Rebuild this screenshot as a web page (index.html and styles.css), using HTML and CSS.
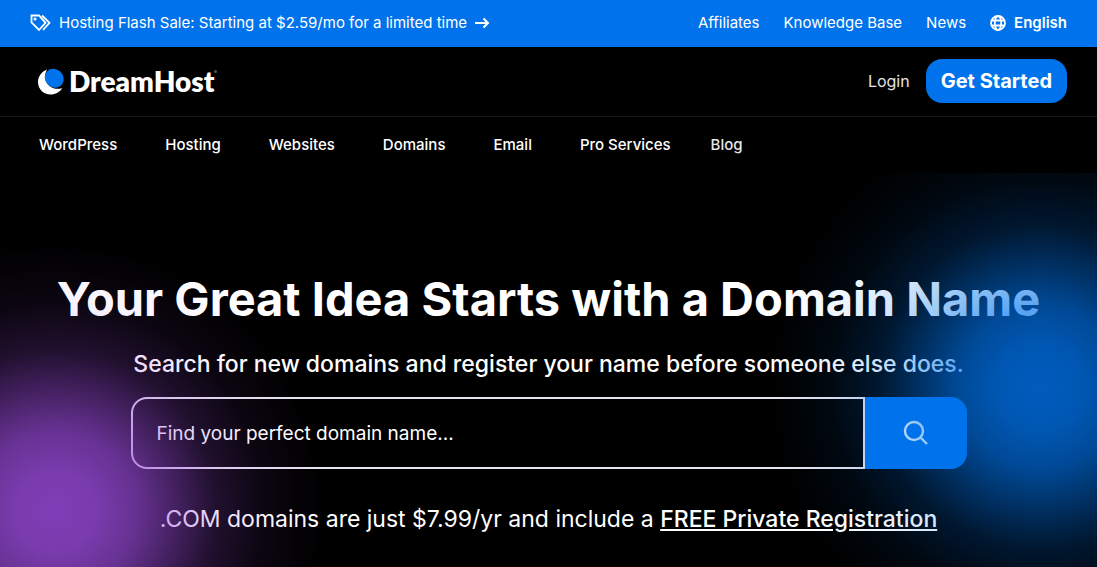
FILE: index.html
```html
<!DOCTYPE html>
<html lang="en">

<head>
  <meta charset="UTF-8">
  <meta name="viewport" content="width=device-width, initial-scale=1">
  <title>Domain Names - DreamHost</title>
  <link rel="stylesheet" href="styles.css">
</head>

<body>
  <div class="topbar">
    <a class="promo" href="#">
      <svg class="icon-tags" viewBox="0 0 22 18" aria-hidden="true">
        <path d="M1.500 1.500h7.500l6.500 7.300-6.500 7.200-7.500-7.500z M12 1.500l7.500 7.300-6.500 7.200" />
        <circle cx="5" cy="5" r=".6" />
      </svg>
      <span>Hosting Flash Sale: Starting at $2.59/mo for a limited time</span>
      <svg class="icon-arrow" viewBox="0 0 16 12" aria-hidden="true">
        <path d="M1 6h13M9.500 1.500L14 6l-4.500 4.500" />
      </svg>
    </a>
    <div class="toplinks">
      <a href="#">Affiliates</a>
      <a href="#">Knowledge Base</a>
      <a href="#">News</a>
      <button class="lang" type="button">
        <svg class="icon-globe" viewBox="0 0 16 16" aria-hidden="true">
          <circle cx="8" cy="8" r="7" />
          <ellipse cx="8" cy="8" rx="3.200" ry="7" />
          <path d="M1.500 5.500h13M1.500 10.500h13" />
        </svg>
        English
      </button>
    </div>
  </div>

  <header class="header">
    <a class="logo" href="#">
      <svg class="icon-moon" viewBox="0 0 26 26" aria-hidden="true">
        <path d="M9 1.500C3.500 3.500 0 8.500 0 14c0 7 5.500 12.500 12.500 12.500 5 0 9.500-2.500 11.800-6.500C14 24 2.500 13.500 9 1.500z" fill="#fff" />
        <ellipse cx="16.200" cy="10.200" rx="10" ry="9" transform="rotate(45 16.200 10.200)" fill="#0073ec" />
      </svg>
      <span>DreamHost</span>
      <i class="mark"></i>
    </a>
    <div class="account">
      <a class="login" href="#">Login</a>
      <a class="started" href="#">Get Started</a>
    </div>
  </header>

  <nav class="nav">
    <a href="#">WordPress</a>
    <a href="#">Hosting</a>
    <a href="#">Websites</a>
    <a href="#">Domains</a>
    <a href="#">Email</a>
    <a href="#">Pro Services</a>
    <a class="blog" href="#">Blog</a>
  </nav>

  <main class="hero">
    <h1>Your Great Idea Starts with a Domain Name</h1>
    <p class="lead">Search for new domains and register your name before someone else does.</p>
    <form class="search">
      <input type="text" aria-label="Domain name" placeholder="Find your perfect domain name...">
      <button type="submit" aria-label="Search">
        <svg class="icon-search" viewBox="0 0 26 26" aria-hidden="true">
          <circle cx="11" cy="11" r="9" />
          <path d="M17.500 17.500l6.500 6.500" />
        </svg>
      </button>
    </form>
    <p class="offer">.COM domains are just $7.99/yr and include a <a href="#">FREE Private Registration</a></p>
  </main>
</body>

</html>
```
FILE: styles.css
```css
* {
  margin: 0;
  padding: 0;
  box-sizing: border-box;
}

body {
  min-height: 100vh;
  display: flex;
  flex-direction: column;
  background: #000;
  color: #fff;
  font-family: Inter, "Open Sans", sans-serif;
  font-size: 15px;
}

a {
  color: inherit;
  text-decoration: none;
}

button,
input {
  border: 0;
  background: none;
  color: inherit;
  font: inherit;
}

svg {
  flex: none;
  fill: none;
  stroke: currentColor;
}

.topbar {
  display: flex;
  justify-content: space-between;
  align-items: center;
  height: 47px;
  padding: 0 30px 2px;
  background: #0073ec;
}

.promo,
.toplinks,
.lang {
  display: flex;
  align-items: center;
}

.promo {
  gap: 7px;
}

.toplinks {
  gap: 24px;
}

.lang {
  gap: 8px;
  font-weight: 600;
}

.icon-tags {
  width: 22px;
  height: 18px;
  stroke-width: 1.8;
}

.icon-arrow {
  width: 16px;
  height: 12px;
  stroke-width: 2;
}

.icon-globe {
  width: 16px;
  height: 16px;
  stroke-width: 1.8;
}

.header {
  display: flex;
  justify-content: space-between;
  align-items: center;
  height: 70px;
  padding: 0 30px 2px 38px;
  border-bottom: 1px solid #1a1a1a;
}

.logo {
  display: flex;
  align-items: center;
  font-family: Lato, sans-serif;
  font-size: 28px;
  font-weight: 800;
}

.icon-moon {
  width: 26px;
  height: 26px;
  margin-right: 5px;
  overflow: visible;
  stroke: none;
}

.mark {
  align-self: flex-start;
  width: 3px;
  height: 3px;
  margin-top: 6px;
  border-radius: 50%;
  background: #555;
}

.account {
  display: flex;
  align-items: center;
  gap: 16px;
}

.login,
.blog {
  color: #e6e6e6;
}

.login {
  font-size: 16px;
}

.started {
  padding: 10px 15px;
  border-radius: 16px;
  background: #0073ec;
  font-size: 20px;
  font-weight: 700;
  line-height: 24px;
}

.nav {
  display: flex;
  gap: 48px;
  height: 56px;
  padding: 0 39px;
  line-height: 56px;
  font-weight: 500;
}

.nav .blog {
  margin-left: -8px;
}

.hero {
  position: relative;
  flex: 1;
  padding: 96px 30px 30px;
  text-align: center;
}

/* colour glows tint the text as well as the background */
.hero::after {
  content: "";
  position: absolute;
  top: 0;
  right: 0;
  bottom: 0;
  left: 0;
  background:
    radial-gradient(circle 270px at calc(100% - 57px) 214px, rgba(0, 115, 236, .8), rgba(0, 115, 236, .76) 15%, rgba(0, 115, 236, .64) 30%, rgba(0, 115, 236, .42) 45%, rgba(0, 115, 236, .2) 60%, rgba(0, 115, 236, .07) 78%, rgba(0, 115, 236, 0)),
    radial-gradient(circle 270px at 55px 338px, rgba(160, 78, 228, .8), rgba(160, 78, 228, .76) 15%, rgba(160, 78, 228, .64) 30%, rgba(160, 78, 228, .42) 45%, rgba(160, 78, 228, .2) 60%, rgba(160, 78, 228, .07) 78%, rgba(160, 78, 228, 0));
  pointer-events: none;
}

h1 {
  font-size: 47px;
  font-weight: 700;
  line-height: 60px;
}

.lead {
  margin-top: 20px;
  font-size: 23px;
  font-weight: 500;
  line-height: 30px;
}

.search {
  display: flex;
  max-width: 836px;
  height: 72px;
  margin: 18px auto 0;
}

.search input {
  flex: 1;
  min-width: 0;
  padding: 0 24px;
  border: 2px solid #e4e4ee;
  border-radius: 16px 0 0 16px;
  font-size: 19px;
}

.search input::placeholder {
  color: #fff;
  opacity: 1;
}

.search button {
  display: flex;
  justify-content: center;
  align-items: center;
  width: 102px;
  border-radius: 0 16px 16px 0;
  background: #0073ec;
}

.icon-search {
  width: 26px;
  height: 26px;
  stroke-width: 2.4;
}

.offer {
  margin-top: 34px;
  font-size: 23px;
  line-height: 32px;
}

.offer a {
  font-weight: 500;
  text-decoration: underline;
}
```
